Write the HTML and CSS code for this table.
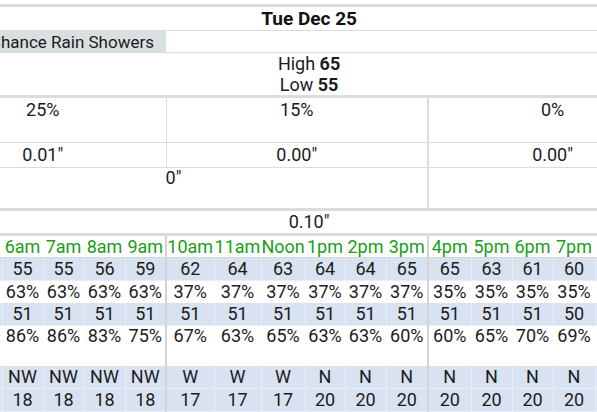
FILE: index.html
```html
<!DOCTYPE html>
<html>
<head>
<meta charset="utf-8">
<link rel="stylesheet" href="styles.css">
</head>
<body>
<div class="wrap">
<table class="fc">
<colgroup>
<col class="c41"><col class="c41"><col class="c41"><col class="c41"><col class="c41"><col class="c41">
<col class="c48"><col class="c47"><col class="c44"><col class="c40"><col class="c41"><col class="c42">
<col class="c43"><col class="c41"><col class="c41"><col class="c42"><col class="c41"><col class="c51">
</colgroup>
<tr class="title"><td colspan="18" class="full">Tue Dec 25</td></tr>
<tr class="cond"><td colspan="6" class="cond-a">Slight Chance Rain Showers</td><td colspan="12"></td></tr>
<tr class="hilo"><td colspan="18" class="full">High <b>65</b><br>Low <b>55</b></td></tr>
<tr class="pop"><td colspan="6">25%</td><td colspan="6" class="b1">15%</td><td colspan="6" class="b2 cpad">0%</td></tr>
<tr class="amt"><td colspan="6">0.01"</td><td colspan="6" class="b1">0.00"</td><td colspan="6" class="b2 cpad">0.00"</td></tr>
<tr class="snow"><td colspan="12">0"</td><td colspan="6" class="b2"></td></tr>
<tr class="tot"><td colspan="18" class="full">0.10"</td></tr>
<tr class="hrs"><td>4am</td><td>5am</td><td>6am</td><td>7am</td><td>8am</td><td>9am</td><td class="b1">10am</td><td>11am</td><td>Noon</td><td>1pm</td><td>2pm</td><td>3pm</td><td class="b2">4pm</td><td>5pm</td><td>6pm</td><td>7pm</td><td>8pm</td><td>9pm</td></tr>
<tr class="blue"><td>56</td><td>55</td><td>55</td><td>55</td><td>56</td><td>59</td><td class="b1">62</td><td>64</td><td>63</td><td>64</td><td>64</td><td>65</td><td class="b2">65</td><td>63</td><td>61</td><td>60</td><td>59</td><td>58</td></tr>
<tr class="white"><td>63%</td><td>63%</td><td>63%</td><td>63%</td><td>63%</td><td>63%</td><td class="b1">37%</td><td>37%</td><td>37%</td><td>37%</td><td>37%</td><td>37%</td><td class="b2">35%</td><td>35%</td><td>35%</td><td>35%</td><td>35%</td><td>35%</td></tr>
<tr class="blue"><td>51</td><td>51</td><td>51</td><td>51</td><td>51</td><td>51</td><td class="b1">51</td><td>51</td><td>51</td><td>51</td><td>51</td><td>51</td><td class="b2">51</td><td>51</td><td>51</td><td>50</td><td>50</td><td>50</td></tr>
<tr class="white hum"><td>86%</td><td>86%</td><td>86%</td><td>86%</td><td>83%</td><td>75%</td><td class="b1">67%</td><td>63%</td><td>65%</td><td>63%</td><td>63%</td><td>60%</td><td class="b2">60%</td><td>65%</td><td>70%</td><td>69%</td><td>72%</td><td>75%</td></tr>
<tr class="blue"><td>NW</td><td>NW</td><td>NW</td><td>NW</td><td>NW</td><td>NW</td><td class="b1">W</td><td>W</td><td>W</td><td>N</td><td>N</td><td>N</td><td class="b2">N</td><td>N</td><td>N</td><td>N</td><td>N</td><td>N</td></tr>
<tr class="blue"><td>18</td><td>18</td><td>18</td><td>18</td><td>18</td><td>18</td><td class="b1">17</td><td>17</td><td>17</td><td>20</td><td>20</td><td>20</td><td class="b2">20</td><td>20</td><td>20</td><td>20</td><td>20</td><td>20</td></tr>
</table>
</div>
</body>
</html>
```

FILE: styles.css
```css
html, body {
  margin: 0;
  padding: 0;
  background: #ffffff;
  overflow: hidden;
}
body {
  font-family: Roboto, "Liberation Sans", sans-serif;
  font-size: 18px;
  color: #1c1c1c;
}
.wrap {
  padding-top: 4px;
}
.fc {
  margin-left: -80px;
  border-collapse: collapse;
  table-layout: fixed;
  width: 767px;
}
.c40 { width: 40px; }
.c41 { width: 41px; }
.c42 { width: 42px; }
.c43 { width: 43px; }
.c44 { width: 44px; }
.c47 { width: 47px; }
.c48 { width: 48px; }
.c51 { width: 51px; }

.fc td {
  padding: 0;
  text-align: center;
  line-height: 20px;
  white-space: nowrap;
  overflow: hidden;
  border: 0;
}
.fc td.full {
  padding-left: 11px;
}
.fc td.cpad {
  padding-right: 11px;
}

/* upper day section */
.title td {
  border-top: 3px solid #dcdcdc;
  border-bottom: 1px solid #dcdcdc;
  height: 23px;
  font-size: 19px;
  font-weight: 700;
  color: #111;
}
.cond td {
  height: 21px;
  border-bottom: 1px solid #dcdcdc;
}
.cond td.cond-a {
  background: #d8e0e0;
  text-align: right;
  padding-right: 12px;
  font-size: 17px;
}
.hilo td {
  height: 41px;
  line-height: 21px;
  border-bottom: 3px solid #dcdcdc;
}
.hilo b {
  font-weight: 700;
}
.pop td {
  height: 42px;
  vertical-align: top;
  padding-top: 2px;
  border-bottom: 1px solid #dcdcdc;
}
.amt td {
  height: 24px;
  border-bottom: 1px solid #dcdcdc;
}
.snow td {
  height: 40px;
  vertical-align: top;
  border-bottom: 3px solid #dcdcdc;
}
.tot td {
  height: 22px;
  border-bottom: 3px solid #dcdcdc;
}
.pop td.b1, .amt td.b1 {
  border-left: 1px solid #dcdcdc;
}
.pop td.b2, .amt td.b2, .snow td.b2 {
  border-left: 2px solid #dcdcdc;
}

/* hourly section */
.hrs td {
  height: 21px;
  color: #1a9e1a;
  border-top: 1px solid #ffffff;
  border-bottom: 1px solid #d6d6d6;
  border-right: 1px solid #ffffff;
}
.blue td {
  height: 22px;
  background: #d9e2f1;
  border-right: 1px solid #e8edf6;
  border-bottom: 1px solid #e8edf6;
}
.white td {
  height: 21px;
  background: #ffffff;
  border-right: 1px solid #ffffff;
  border-bottom: 1px solid #ffffff;
}
.hum td {
  height: 39px;
  vertical-align: top;
}
.hrs td.b1, .hrs td.b2,
.blue td.b1, .blue td.b2,
.white td.b1, .white td.b2 {
  border-left: 2px solid #d4d4d4;
}
```
